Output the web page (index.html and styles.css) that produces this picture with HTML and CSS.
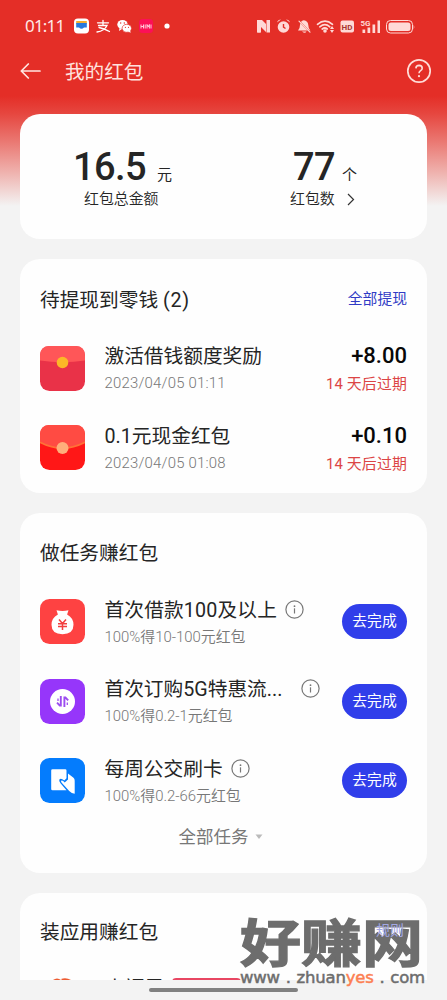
FILE: index.html
```html
<!DOCTYPE html>
<html lang="zh-CN">
<head>
<meta charset="utf-8">
<title>我的红包</title>
<link rel="stylesheet" href="styles.css">
</head>
<body>
<div class="screen">
  <header class="status">
    <span class="clock">01:11</span>
    <svg class="status-apps" width="98" height="18" viewBox="0 0 98 18">
      <rect x="0" y="1.500" width="15" height="15" rx="4" fill="#fff"/>
      <path d="M2.200 4h10.600v3H2.200z" fill="#f5ad2e"/><path d="M2.200 6h10.600v4.500H10q-2.500 2.400-5 0H2.200z" fill="#2878dc"/>
      <g fill="none" stroke="#fff" stroke-width="1.300" stroke-linecap="round"><path d="M23.500 5.800h11M29 3.300v5M24.500 8.500h8.500Q30.500 14 23 15M25 10.500Q30 11.500 35.500 14.500"/></g>
      <ellipse cx="48.500" cy="7.500" rx="5.200" ry="4.600" fill="#fff"/><ellipse cx="52.800" cy="11.300" rx="4.700" ry="4" fill="#fff" stroke="#e42e27" stroke-width=".7"/>
      <path d="M45.500 11l-.5 3 3-2zM54 14l2.500 2-.3-3z" fill="#fff"/>
      <g fill="#e42e27"><circle cx="46.700" cy="6" r=".7"/><circle cx="50.300" cy="6" r=".7"/><circle cx="51.400" cy="10.300" r=".6"/><circle cx="54.500" cy="10.300" r=".6"/></g>
      <rect x="65" y="2" width="14" height="14" rx="3.500" fill="#fc1057"/>
      <path d="M67 7.500v4M67 9.500h2.500M69.500 7.500v4M71.200 7.500v4M73 11.500v-4l1.200 2.500 1.200-2.500v4M77 7.500v4" fill="none" stroke="#ffc9d8" stroke-width="1"/>
      <circle cx="93" cy="9" r="2.600" fill="#fff"/>
    </svg>
    <svg class="status-system" width="158" height="20" viewBox="0 0 158 20">
      <g fill="#ffd9d6">
        <path d="M.5 4h4.500l4 4v8L4 11v5.500H.5zM13 16.500H9M9.500 4H13v12.500H9.500z"/>
        <path d="M0 4h3.300v12.500H0z"/>
        <circle cx="26.500" cy="11" r="5.800"/><path d="M20 6.500q1-3 4-3zM33 6.500q-1-3-4-3z"/>
        <path d="M41 14.500q2-2 2-5.500.3-4.200 3.800-4.700 4 .5 4.500 4.700 0 3.500 2 5.500zM45 15.500h4.500q-1.500 2.500-4.500 0z"/>
        <circle cx="68" cy="15" r="1.800"/><path d="M75 10l2 3h-4zM75 17l2-3h-4z"/>
        <rect x="83.500" y="4.500" width="13.500" height="12" rx="2"/>
        <path d="M105.500 13.500h2.700V17h-2.700zM110.500 11.500h2.700V17h-2.700zM115.500 8.500h2.700V17h-2.700zM120.500 4.500h2.500V17h-2.500z"/>
        <rect x="131.500" y="6.500" width="22" height="8.500" rx="2.500"/><path d="M156.700 8.500q1.300 2.500 0 5z"/>
      </g>
      <path d="M26.500 8v3.200l2 1.300M41 4l13 13" fill="none" stroke="#e42e27" stroke-width="1.400"/>
      <g fill="none" stroke="#ffd9d6" stroke-width="1.700" stroke-linecap="round"><path d="M42 5.200l11 11" stroke-width="1.200"/><path d="M60.500 8.300q7.500-6.500 15 0M62.800 10.800q5.200-4.300 10 0M65.200 13q2.800-2 5 0"/></g>
      <rect x="129.500" y="4.500" width="26" height="12.500" rx="4" fill="none" stroke="#ffd9d6" stroke-width="1"/>
      <text class="hd" x="84.600" y="13.700" fill="#a83630">HD</text><text class="five-g" x="103.500" y="9.700" fill="#ffd9d6">5G</text>
    </svg>
  </header>
  <nav class="nav">
    <svg width="22" height="16" viewBox="0 0 22 16" fill="none" stroke="#ffe6e2" stroke-width="1.700" stroke-linecap="round" stroke-linejoin="round"><path d="M20 8H1.500M8.300 1L1.300 8l7 7"/></svg>
    <h1 class="page-title">我的红包</h1>
    <svg class="help" width="26" height="26" viewBox="0 0 26 26" fill="none" stroke="#ffdcd7"><circle cx="13" cy="13" r="11.200" stroke-width="1.700"/><path d="M9.900 10.400q.1-3 3.200-3 3.100.1 3.100 2.800 0 1.400-1.600 2.400-1.600 1-1.600 2.700" stroke-width="1.600"/><circle cx="13" cy="18.200" r="1.100" fill="#ffdcd7" stroke="none"/></svg>
  </nav>
  <main class="cards">
    <section class="card summary">
      <div class="stat stat-total">
        <div class="stat-value"><span class="number">16.5</span><span class="unit">元</span></div>
        <div class="stat-label">红包总金额</div>
      </div>
      <div class="stat stat-count">
        <div class="stat-value"><span class="number">77</span><span class="unit">个</span></div>
        <div class="stat-label">红包数<svg class="chevron" width="8" height="13" viewBox="0 0 8 13" fill="none" stroke="#333" stroke-width="1.200"><path d="M1 1l5.500 5.500L1 12"/></svg></div>
      </div>
    </section>

    <section class="card withdraw">
      <div class="card-head"><h2 class="card-title">待提现到零钱 <span class="count">(2)</span></h2><span class="link">全部提现</span></div>
      <div class="row">
        <svg class="row-icon" viewBox="0 0 45 45"><rect width="45" height="45" rx="9.500" fill="#e93248"/><path d="M0 14.500V9.500Q0 0 9.500 0h26Q45 0 45 9.500v5Q22.500 18 0 14.500z" fill="#ff5658"/><circle cx="22.500" cy="16.500" r="5.800" fill="#fcb727"/></svg>
        <div class="row-main"><div class="row-title">激活借钱额度奖励</div><div class="row-sub date">2023/04/05 01:11</div></div>
        <div class="amount-box"><div class="amount">+8.00</div><div class="expiry">14 天后过期</div></div>
      </div>
      <div class="row">
        <svg class="row-icon" viewBox="0 0 45 45"><rect width="45" height="45" rx="9.500" fill="#ff1717"/><path d="M0 17V9.500Q0 0 9.500 0h26Q45 0 45 9.500V17Q22.500 29 0 17z" fill="#ff4b43"/><path d="M0 17.300Q22.500 29 45 17.300" fill="none" stroke="#ff7137" stroke-width="1.800"/><circle cx="22.500" cy="23" r="6" fill="#ffae7b"/></svg>
        <div class="row-main"><div class="row-title">0.1元现金红包</div><div class="row-sub date">2023/04/05 01:08</div></div>
        <div class="amount-box"><div class="amount">+0.10</div><div class="expiry">14 天后过期</div></div>
      </div>
    </section>

    <section class="card tasks">
      <div class="card-head"><h2 class="card-title">做任务赚红包</h2></div>
      <div class="row">
        <svg class="row-icon" viewBox="0 0 45 45"><rect width="45" height="45" rx="9.500" fill="#fe4242"/><path d="M16.500 11.200q6 1.500 12 0l-1.400 4.300q6.400 3.500 6.400 10.300 0 9.400-11 9.400t-11-9.400q0-6.800 6.400-10.300z" fill="#fff"/><path d="M19 20.500l3.500 4 3.500-4M18 24.700h9M18 27.500h9M22.500 24.500V31" fill="none" stroke="#f23f3f" stroke-width="1.500"/></svg>
        <div class="row-main"><div class="row-title"><span class="wide">首次借款100及以上</span><svg class="info" viewBox="0 0 19 19"><circle cx="9.500" cy="9.500" r="8.600" fill="none" stroke="#777" stroke-width="1.200"/><circle cx="9.500" cy="6.200" r=".9" fill="#777"/><path d="M9.500 8.300v5.200" stroke="#777" stroke-width="1.200"/></svg></div><div class="row-sub">100%得10-100元红包</div></div>
        <button class="go">去完成</button>
      </div>
      <div class="row">
        <svg class="row-icon" viewBox="0 0 45 45"><rect width="45" height="45" rx="9.500" fill="#9636fa"/><circle cx="22.500" cy="22.500" r="12.500" fill="#fff"/><path d="M20.800 17v9.500h-1L17 23.700M24.400 28v-9.500h1l2.800 2.800" fill="none" stroke="#9c4cf0" stroke-width="1.900"/><path d="M18 19.500v2.500M27.300 23.500V26" stroke="#9c4cf0" stroke-width="1.300"/></svg>
        <div class="row-main"><div class="row-title"><span>首次订购5G特惠流...</span><svg class="info info-far" viewBox="0 0 19 19"><circle cx="9.500" cy="9.500" r="8.600" fill="none" stroke="#777" stroke-width="1.200"/><circle cx="9.500" cy="6.200" r=".9" fill="#777"/><path d="M9.500 8.300v5.200" stroke="#777" stroke-width="1.200"/></svg></div><div class="row-sub">100%得0.2-1元红包</div></div>
        <button class="go">去完成</button>
      </div>
      <div class="row">
        <svg class="row-icon" viewBox="0 0 45 45"><rect width="45" height="45" rx="9.500" fill="#047cfd"/><path d="M12.500 11.300h12.700q1.300 0 1.300 1.300v7.700l-2.200 2.200q-3.500-3-4.800-1.200-1 1.700 1 4l6 6.900h-14q-1.300 0-1.300-1.300V12.600q0-1.300 1.300-1.300z" fill="#fff"/><path d="M28 15.500l5.500 4.300q1.200 1.200 1.200 3v13q-3-.3-5.500-2.800l-7.700-8.500q-1-1.500 0-2 .8-.3 1.700.6l1.500 1.500 3.300-3z" fill="#fff"/></svg>
        <div class="row-main"><div class="row-title"><span>每周公交刷卡</span><svg class="info" viewBox="0 0 19 19"><circle cx="9.500" cy="9.500" r="8.600" fill="none" stroke="#777" stroke-width="1.200"/><circle cx="9.500" cy="6.200" r=".9" fill="#777"/><path d="M9.500 8.300v5.200" stroke="#777" stroke-width="1.200"/></svg></div><div class="row-sub">100%得0.2-66元红包</div></div>
        <button class="go">去完成</button>
      </div>
      <div class="all-tasks">全部任务<svg width="8" height="6" viewBox="0 0 8 6"><path d="M.5.5h7L4 5z" fill="#bbb"/></svg></div>
    </section>

    <section class="card apps">
      <div class="card-head"><h2 class="card-title">装应用赚红包</h2><span class="link rules">规则</span></div>
      <div class="peek">
        <svg width="18" height="2" viewBox="0 0 18 2"><path d="M0 2q4-3 8 0zM8 1q5-2 10 1H9z" fill="#ed5b31"/></svg>
        <span class="peek-title">幸福里</span>
        <span class="peek-badge"></span>
      </div>
    </section>
  </main>
  <div class="home-bar"></div>
  <div class="watermark">
    <div class="wm-name">好赚网</div>
    <div class="wm-url"><span>www</span><span>.</span><span>zhuan<b>yes</b></span><span>.</span><span>com</span></div>
  </div>
</div>
</body>
</html>
```
FILE: styles.css
```css
* { box-sizing: border-box; }
body { margin: 0; font-family: Roboto, "Noto Sans CJK SC", sans-serif; color: #252525; }
svg { display: block; flex: none; }
h1, h2 { margin: 0; font-weight: 400; }
.screen { position: relative; width: 447px; height: 1000px; overflow: hidden; white-space: nowrap; background: linear-gradient(#e42e27 0, #e42e27 96px, #e64740 114px, #ea7771 141px, #efb3af 173px, #f3f3f3 206px); }
.status { display: flex; align-items: center; height: 51px; padding-left: 25px; }
.clock { width: 49px; font: 400 17px/20px "Noto Sans", sans-serif; letter-spacing: -.8px; color: #ffe9e6; }
.status-system { margin-left: 85px; }
.hd { font: 700 8px Roboto, sans-serif; }
.five-g { font: 700 8px Roboto, sans-serif; }
.nav { display: flex; align-items: center; height: 40px; padding: 0 15px 0 20px; }
.page-title { margin-left: 23px; padding-top: 3px; font-size: 19.600px; line-height: 28px; color: #ffe1dd; }
.help { margin-left: auto; }
.cards { display: flex; flex-direction: column; gap: 20px; padding: 23px 20px 0; }
.card { border-radius: 20px; background: #fefefe; }
.summary { display: flex; height: 125px; padding: 32px 0 0 53px; }
.stat-total { width: 220px; }
.stat-value { display: flex; align-items: baseline; height: 42px; line-height: 42px; }
.number { font-size: 38px; font-weight: 500; letter-spacing: -.6px; }
.stat-total .unit { margin-left: 11px; }
.unit { margin-left: 7px; font-size: 15px; }
.stat-label { display: flex; align-items: center; margin-left: 11px; height: 23px; font-size: 14.900px; line-height: 23px; font-weight: 350; }
.stat-count .stat-label { margin-left: -3px; }
.chevron { margin-left: 12px; }
.card-head { display: flex; align-items: center; justify-content: space-between; height: 40px; }
.card-title { padding-top: 3px; font-size: 19.700px; line-height: 30px; }
.count { letter-spacing: .7px; }
.link { padding-bottom: 3px; font-size: 14.800px; color: #303bc5; }
.withdraw { height: 234px; padding: 20px 20px 0; }
.tasks { height: 360px; padding: 19px 20px 0; }
.row { display: flex; align-items: center; height: 79.500px; }
.withdraw .card-head { margin-bottom: 9.500px; }
.tasks .card-head { margin-bottom: 10px; }
.row-icon { width: 45px; height: 45px; }
.row-main { margin-left: 19.500px; padding-top: 3px; }
.row-title { display: flex; align-items: center; height: 28px; font-size: 19.700px; line-height: 28px; }
.wide { letter-spacing: .15px; }
.row-sub { height: 25px; font-size: 14.900px; line-height: 25px; color: #777; font-weight: 350; }
.date { letter-spacing: .22px; }
.amount-box { margin-left: auto; padding-top: 3px; text-align: right; }
.amount { height: 28px; font-size: 22px; font-weight: 500; line-height: 25px; color: #080808; }
.expiry { height: 25px; font-size: 14.900px; line-height: 26px; letter-spacing: .15px; color: #dc4545; }
.info { width: 19px; height: 19px; margin: -3px 0 0 8px; }
.info-far { margin-left: 18.500px; }
.go { width: 65px; height: 35px; margin-left: auto; padding: 0; border: 0; border-radius: 18px; background: #303eea; color: #fff; font: 400 14.800px/35px Roboto, "Noto Sans CJK SC", sans-serif; }
.all-tasks { display: flex; align-items: center; justify-content: center; gap: 6px; height: 32px; padding-right: 6px; font-size: 17.500px; line-height: 32px; color: #777; }
.apps { height: 87px; padding: 18px 20px 0; border-radius: 20px 20px 0 0; overflow: hidden; }
.rules { position: relative; z-index: 2; padding: 0 3px 4px 0; font-size: 14px; color: #a3a7e4; }
.peek { display: flex; height: 10px; margin-top: 19px; padding-left: 13px; }
.peek svg { margin-top: 8px; }
.peek-title { margin-left: 34px; font-size: 19.700px; line-height: 30px; margin-top: 4px; }
.peek-badge { width: 69px; height: 18px; margin: 8px 0 0 8px; border: 2px solid #e84662; border-radius: 4px; }
.home-bar { position: absolute; left: 149px; top: 987.500px; width: 149px; height: 4px; border-radius: 2px; background: #808080; }
.watermark { position: absolute; z-index: 1; left: 240px; top: 920px; width: 186px; color: #6d6d6d; }
.wm-name { height: 48px; font-size: 61px; line-height: 48px; font-weight: 700; -webkit-text-stroke: 1.500px #6d6d6d; transform: scaleY(.84); }
.wm-url { display: flex; justify-content: space-between; width: 185px; font: 400 16.500px/20px "DejaVu Sans", sans-serif; letter-spacing: -.2px; -webkit-text-stroke: .5px; }
.wm-url b { font-weight: 400; color: #fc7f52; }
```
